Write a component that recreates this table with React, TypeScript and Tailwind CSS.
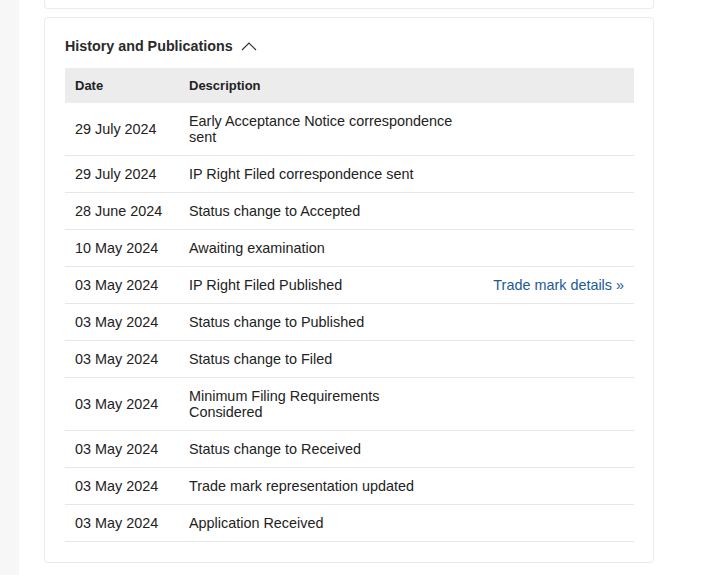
import React from 'react';

const rows: { date: string; desc: string; link?: string }[] = [
  { date: '29 July 2024', desc: 'Early Acceptance Notice correspondence sent' },
  { date: '29 July 2024', desc: 'IP Right Filed correspondence sent' },
  { date: '28 June 2024', desc: 'Status change to Accepted' },
  { date: '10 May 2024', desc: 'Awaiting examination' },
  { date: '03 May 2024', desc: 'IP Right Filed Published', link: 'Trade mark details »' },
  { date: '03 May 2024', desc: 'Status change to Published' },
  { date: '03 May 2024', desc: 'Status change to Filed' },
  { date: '03 May 2024', desc: 'Minimum Filing Requirements Considered' },
  { date: '03 May 2024', desc: 'Status change to Received' },
  { date: '03 May 2024', desc: 'Trade mark representation updated' },
  { date: '03 May 2024', desc: 'Application Received' },
];

const App = () => {
  return (
    <div className="flex min-h-[575px] w-[705px] bg-white font-['Liberation_Sans',Arial,sans-serif] text-[#222]">
      {/* side strip */}
      <div className="w-[19px] shrink-0 bg-[#f7f7f7]"></div>

      <div className="flex-1 pl-[25px]">
        {/* previous card, cut off */}
        <div className="h-[9px] w-[610px] rounded-b-[4px] border-x border-b border-[#ebebeb]"></div>

        {/* history card */}
        <div className="mt-[8px] w-[610px] rounded-[4px] border border-[#ebebeb] px-[20px] pt-[19px] pb-[20px]">
          <div className="mb-[13px] flex items-center gap-[8px] text-[14.3px] font-bold leading-[18px] text-[#2a2a2a]">
            <span>History and Publications</span>
            <svg width="16" height="9" viewBox="0 0 16 9" fill="none" stroke="#333" strokeWidth="1.2">
              <path d="M1 8 L8 1 L15 8" />
            </svg>
          </div>

          <table className="w-[569px] table-fixed border-collapse text-left text-[14.4px] leading-[16px]">
            <colgroup>
              <col className="w-[114px]" />
              <col className="w-[286px]" />
              <col />
            </colgroup>
            <thead>
              <tr className="bg-[#ececec]">
                <th className="px-[10px] py-[10px] text-[13px] font-bold leading-[15px]">Date</th>
                <th className="px-[10px] py-[10px] text-[13px] font-bold leading-[15px]">Description</th>
                <th className="px-[10px] py-[10px]"></th>
              </tr>
            </thead>
            <tbody>
              {rows.map((r, i) => (
                <tr key={i} className="border-b border-[#e6e6e6]">
                  <td className="px-[10px] py-[10px] align-middle">{r.date}</td>
                  <td className="px-[10px] py-[10px] align-middle">{r.desc}</td>
                  <td className="px-[10px] py-[10px] text-right align-middle">
                    {r.link && <a className="text-[#1c5a94]">{r.link}</a>}
                  </td>
                </tr>
              ))}
            </tbody>
          </table>
        </div>
      </div>
    </div>
  );
};

export default App;
